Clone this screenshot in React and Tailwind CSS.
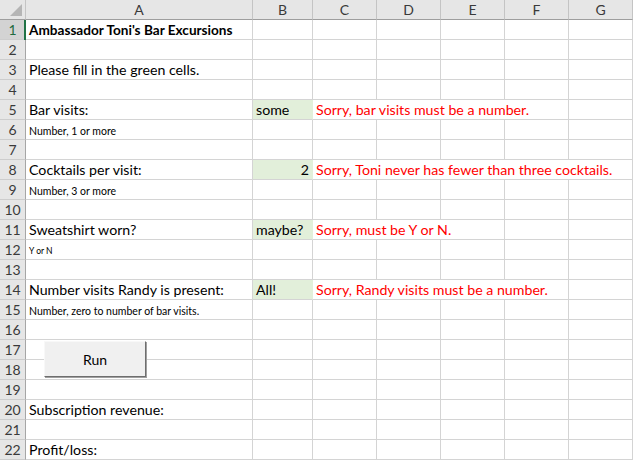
import React from 'react';

const COLS = ['A', 'B', 'C', 'D', 'E', 'F', 'G'];

const GRID = 'grid grid-cols-[26px_227px_60px_64px_64px_64px_64px_64px]';

const SPAN = {
  3: 'col-span-3',
  4: 'col-span-4',
  5: 'col-span-5',
};

// one entry per sheet row
const rows = [
  { n: 1, a: "Ambassador Toni's Bar Excursions", bold: true, active: true },
  { n: 2 },
  { n: 3, a: 'Please fill in the green cells.' },
  { n: 4 },
  { n: 5, a: 'Bar visits:', b: 'some', msg: 'Sorry, bar visits must be a number.', span: 4 },
  { n: 6, a: 'Number, 1 or more', size: 'small' },
  { n: 7 },
  { n: 8, a: 'Cocktails per visit:', b: '2', num: true, msg: 'Sorry, Toni never has fewer than three cocktails.', span: 5 },
  { n: 9, a: 'Number, 3 or more', size: 'small' },
  { n: 10 },
  { n: 11, a: 'Sweatshirt worn?', b: 'maybe?', msg: 'Sorry, must be Y or N.', span: 3 },
  { n: 12, a: 'Y or N', size: 'tiny' },
  { n: 13 },
  { n: 14, a: 'Number visits Randy is present:', b: 'All!', msg: 'Sorry, Randy visits must be a number.', span: 4 },
  { n: 15, a: 'Number, zero to number of bar visits.', size: 'small' },
  { n: 16 },
  { n: 17 },
  { n: 18 },
  { n: 19 },
  { n: 20, a: 'Subscription revenue:' },
  { n: 21 },
  { n: 22, a: 'Profit/loss:' },
];

const cell = 'h-[20px] border-r border-b border-[#d4d4d4] flex items-end whitespace-nowrap overflow-visible';
const body = 'text-[14.2px] leading-[16px] pb-[1px]';

const textSize = (row) => {
  if (row.size === 'small') return 'text-[10.5px] leading-[12px] pb-[2px]';
  if (row.size === 'tiny') return 'text-[8.5px] leading-[10px] pb-[3px]';
  if (row.bold) return 'text-[13.6px] leading-[16px] pb-[1px] font-bold';
  return body;
};

function Row({ row }) {
  const span = row.msg ? row.span : 0;
  const empties = [];
  for (let i = 0; i < 5 - span; i++) empties.push(i);

  return (
    <div className={GRID}>
      <div
        className={`h-[20px] border-r border-b border-r-[#a6a6a6] border-b-[#cdcdcd] flex items-center justify-center text-[14px] leading-none ${
          row.active ? 'bg-[#d3d3d3] text-[#1e6b3e]' : 'bg-[#e6e6e6] text-[#3a3a3a]'
        }`}
      >
        {row.n}
      </div>
      <div className={`${cell} relative pl-[3px] text-black ${textSize(row)}`}>
        {row.active && <span className="absolute left-[-2px] top-0 h-[20px] w-[2px] bg-[#217346]" />}
        {row.a}
      </div>
      <div
        className={`${cell} px-[3px] ${body} text-black ${row.b ? 'bg-[#e2efda] border-r-[#e2efda]' : ''} ${
          row.num ? 'justify-end' : ''
        }`}
      >
        {row.b}
      </div>
      {row.msg && <div className={`${cell} ${SPAN[span]} pl-[3px] ${body} text-[#ff0000]`}>{row.msg}</div>}
      {empties.map((i) => (
        <div key={i} className={cell} />
      ))}
    </div>
  );
}

export default function App() {
  return (
    <div className="relative w-[633px] h-[460px] overflow-hidden bg-white font-['Lato','Liberation_Sans',sans-serif]">
      {/* column header */}
      <div className={GRID}>
        <div className="relative h-[20px] bg-[#e6e6e6] border-r border-b border-r-[#c4c4c4] border-b-[#9e9e9e]">
          <span className="absolute right-[3px] bottom-[3px] w-0 h-0 border-l-[12px] border-l-transparent border-b-[12px] border-b-[#b5b5b5]" />
        </div>
        {COLS.map((c) => (
          <div
            key={c}
            className="h-[20px] bg-[#e6e6e6] border-r border-b border-r-[#c4c4c4] border-b-[#9e9e9e] flex items-center justify-center text-[14px] leading-none text-[#3a3a3a]"
          >
            {c}
          </div>
        ))}
      </div>

      {rows.map((row) => (
        <Row key={row.n} row={row} />
      ))}

      {/* form button sitting over rows 17-18 */}
      <button className="absolute left-[44px] top-[341px] w-[102px] h-[36px] bg-[#f0f0f0] border border-t-[#f8f8f8] border-l-[#f8f8f8] border-r-[#6e6e6e] border-b-[#6e6e6e] shadow-[1px_1px_0_#a0a0a0] text-[14px] text-black font-['Lato','Liberation_Sans',sans-serif]">
        Run
      </button>
    </div>
  );
}
